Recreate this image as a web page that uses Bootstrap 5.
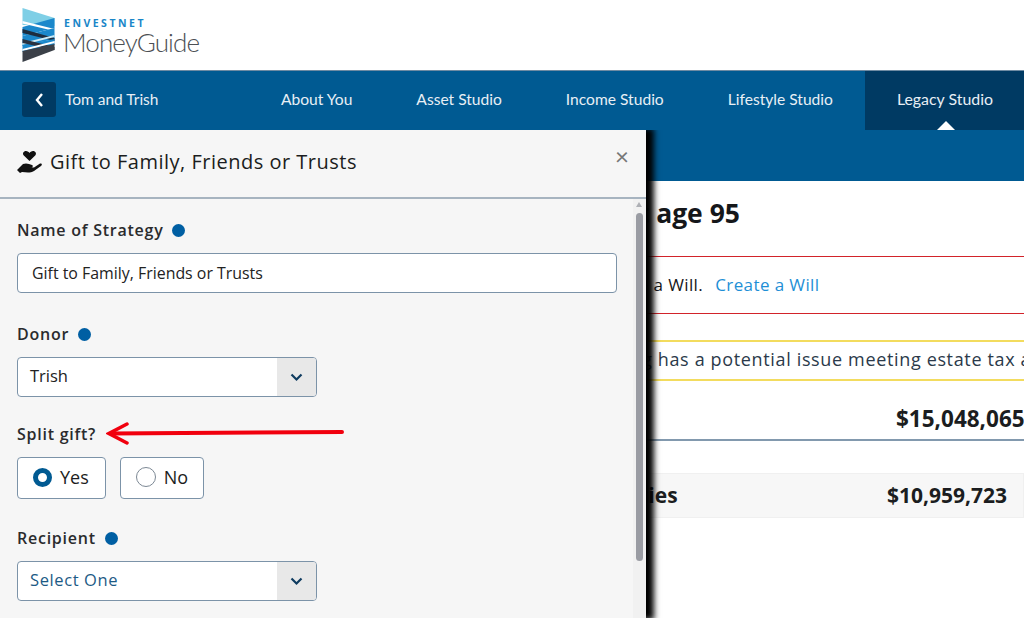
<!DOCTYPE html>
<html lang="en">
<head>
<meta charset="utf-8">
<title>MoneyGuide</title>
<link href="https://cdn.jsdelivr.net/npm/bootstrap@5.3.0/dist/css/bootstrap.min.css" rel="stylesheet">
<style>
html,body{height:618px;overflow:hidden;background:#fff}
body{font-family:"Lato","Liberation Sans",sans-serif;color:#1b1d20;position:relative}
.brand-bar{height:70px;padding-left:22px}
.brand-top{font:700 10.5px/1 "Open Sans","Liberation Sans",sans-serif;letter-spacing:2.500px;color:#1a86c8;margin-left:1px;margin-bottom:0;margin-top:3px}
.brand-name{font:300 26px/1 "Lato",sans-serif;letter-spacing:-.9px;color:#4c4f54}
.main-nav{height:60px;background:#005a92;color:#e8eff5;font-size:15.600px;border-top:1px solid #6f8ba3}
.back-group{padding-left:22px;padding-bottom:2px}
.back-btn{width:34px;height:35px;background:#003a63;border-radius:3px}
.client{width:218px;padding-left:9px;font-size:15.500px}
.nav-first{padding-left:7px!important}
.nav-item-x{padding:0 32px 2px;height:100%;display:flex;align-items:center;position:relative;white-space:nowrap}
.nav-item-x.on{background:#003a63;flex:1 0 0;justify-content:center;padding:0 0 3px 1px;font-size:15.900px}
.nav-item-x.on::after{content:"";position:absolute;left:72px;bottom:0;border:9px solid transparent;border-top:0;border-bottom:9px solid #fff}
.sub-bar{height:51px;background:#005a92}
.main-area{padding-left:400px;font-family:"Open Sans",sans-serif;font-size:17px;overflow:hidden}
.page-title{font-weight:700;font-size:26.500px;line-height:32px;margin:16px 0 27px;white-space:nowrap;color:#15171a;padding-left:16px}
.warn{height:58px;border-top:1px solid #d2232a;border-bottom:1px solid #d2232a;white-space:nowrap;overflow:hidden;margin-bottom:26px;padding-left:114px;letter-spacing:.4px;color:#15171a}
.warn a{color:#1e8fd6;text-decoration:none;margin-left:12px}
.warn2{height:41px;border-top:2px solid #f3dc5e;border-bottom:2px solid #f3dc5e;white-space:nowrap;overflow:hidden;color:#2b3a4a;font-size:18px;letter-spacing:.650px;padding:0 0 2px 127px}
.total{height:60px;border-bottom:2px solid #8299ae;white-space:nowrap;overflow:hidden;font-weight:700;font-size:22.500px;padding:18px 0 0 496px}
.tier{height:45px;margin-top:32px;background:#f7f7f7;border:1px solid #f0f0f0;font-weight:700;font-size:21px;padding:0 16px 0 37px;white-space:nowrap}
.panel-x{position:absolute;left:0;top:130px;bottom:0;width:646px;background:#f6f6f6;box-shadow:6px 0 6px 2px #000;clip-path:inset(0 -30px 0 0);z-index:5}
.panel-head{height:69px;padding:0 17px 4px;border-bottom:2px solid #a7b4c0}
.panel-title{font:400 20px/1 "Open Sans",sans-serif;color:#1b1d20;letter-spacing:.5px}
.close-x{font-size:24px;line-height:1;color:#777;margin-bottom:11px}
.panel-body-x{padding:21px 17px;position:relative}
.lbl{font:600 16px/20px "Open Sans",sans-serif;letter-spacing:.75px;color:#2a2b2d;margin-bottom:13px}
.dot{display:inline-block;width:13px;height:13px;border-radius:50%;background:#005fa3;margin-left:9px;vertical-align:-1px}
.name-input{width:600px;height:40px;border:1px solid #7c93a8;border-radius:4px;background:#fff;padding:0 14px;font:400 15.900px "Open Sans",sans-serif;margin-bottom:31px;color:#222}
.sel{width:300px;height:40px;border:1px solid #7c93a8;border-radius:4px;background:#fff;padding-left:12px;font:400 16.500px "Open Sans",sans-serif;overflow:hidden;color:#222}
.sel-text{padding-bottom:3px}
.sel.gap-after{margin-bottom:27px}
.sel-muted{color:#1c5a85;letter-spacing:.6px;font-weight:500}
.sel-arrow{width:39px;height:100%;background:#e8e8e8}
.opts{margin-bottom:29px;gap:14px}
.opt{height:42px;border:1px solid #7c93a8;border-radius:4px;background:#fff;font:400 18px "Open Sans",sans-serif;padding:0 15px 2px;gap:8px}
.opt-wide{padding-right:16px}
.radio-on{width:19px;height:19px;border:5px solid #005a92;border-radius:50%;background:#fff}
.radio-off{width:20px;height:20px;border:1px solid #7c8894;border-radius:50%;background:#fff}
.scroll-x{position:absolute;right:0;top:69px;bottom:0;width:13px;background:#f1f1f1}
.thumb{position:absolute;left:3px;top:14px;width:7px;height:348px;background:#9a9ca3;border-radius:4px}
.up-arr{position:absolute;left:3px;top:3px;border:3.500px solid transparent;border-top:0;border-bottom:5px solid #aeb0b5}
.arrow-svg{position:absolute;left:106px;top:221px}
</style>
</head>
<body>
<header class="brand-bar d-flex align-items-center">
  <svg width="33" height="54" viewBox="0 0 32 54" class="flex-shrink-0">
    <polygon points="0,0 32,10 32,18 0,17" fill="#7fcfe6"/>
    <polygon points="0,19 32,10 32,20 0,28" fill="#1b88cb"/>
    <polygon points="0,13 32,21 32,23 0,15.500" fill="#fff"/>
    <polygon points="0,28 32,20 32,31 0,38" fill="#1b88cb"/>
    <polygon points="0,21 32,30 32,33 0,25" fill="#1d2d3f"/>
    <polygon points="0,35 32,27 32,29 0,37" fill="#cdebf5"/>
    <polygon points="0,37 32,31 32,37 0,44" fill="#1b88cb"/>
    <polygon points="0,31 32,39 32,42 0,35" fill="#2a3240"/>
    <polygon points="0,41 32,33 32,35 0,43" fill="#fff"/>
    <polygon points="0,43 32,36 32,42 0,54" fill="#3b4048"/>
  </svg>
  <div style="margin-left:8px">
    <div class="brand-top">ENVESTNET</div>
    <div class="brand-name">MoneyGuide</div>
  </div>
</header>
<nav class="main-nav d-flex align-items-center">
  <div class="back-group d-flex align-items-center">
    <span class="back-btn d-flex align-items-center justify-content-center">
      <svg width="10" height="16" viewBox="0 0 10 16"><path d="M8 2 L3 8 L8 14" fill="none" stroke="#fff" stroke-width="2.400"/></svg>
    </span>
    <span class="client">Tom and Trish</span>
  </div>
  <div class="nav-item-x nav-first">About You</div>
  <div class="nav-item-x">Asset Studio</div>
  <div class="nav-item-x">Income Studio</div>
  <div class="nav-item-x">Lifestyle Studio</div>
  <div class="nav-item-x on">Legacy Studio</div>
</nav>
<div class="sub-bar"></div>
<main class="main-area">
  <div class="page-title">Estate Analysis at age 95</div>
  <div class="warn d-flex align-items-center">You do not have a Will. <a href="#">Create a Will</a></div>
  <div class="warn2 d-flex align-items-center">Your planning has a potential issue meeting estate tax and other needs</div>
  <div class="total d-flex align-items-center">$15,048,065</div>
  <div class="tier d-flex align-items-center justify-content-between"><span>Non-Charitable Parties</span><span>$10,959,723</span></div>
</main>
<aside class="panel-x">
  <div class="panel-head d-flex align-items-center justify-content-between">
    <div class="d-flex align-items-center gap-2">
      <svg width="25" height="22" viewBox="0 0 25 22"><path d="M12.500 10 L6.800 4.500 C5 2.500 6.500 0 9 0 C10.500 0 12 1 12.500 2 C13 1 14.500 0 16 0 C18.500 0 20 2.500 18.200 4.500Z" fill="#111"/><path d="M0 19 L6 13 C8 12.300 10 12.300 12 13 L15 14 C16.500 14.500 16 16.500 14 16.300 L10 16 L17 16.500 L23 12.500 C25 12 25.500 14 24 15 L17 20 C15 21.500 13 21.500 11 21.500 L5 21 L3 22 Z" fill="#111"/></svg>
      <span class="panel-title">Gift to Family, Friends or Trusts</span>
    </div>
    <span class="close-x">×</span>
  </div>
  <div class="panel-body-x">
    <div class="lbl">Name of Strategy<span class="dot"></span></div>
    <div class="name-input d-flex align-items-center">Gift to Family, Friends or Trusts</div>
    <div class="lbl">Donor<span class="dot"></span></div>
    <div class="sel gap-after d-flex align-items-center justify-content-between"><span class="sel-text">Trish</span><span class="sel-arrow d-flex align-items-center justify-content-center"><svg width="13" height="9" viewBox="0 0 13 9"><path d="M1.500 1.500 L6.500 6.500 L11.500 1.500" fill="none" stroke="#0f3c60" stroke-width="2.200"/></svg></span></div>
    <div class="lbl">Split gift?</div>
    <div class="opts d-flex">
      <div class="opt opt-wide d-flex align-items-center"><span class="radio-on"></span>Yes</div>
      <div class="opt d-flex align-items-center"><span class="radio-off"></span>No</div>
    </div>
    <div class="lbl">Recipient<span class="dot"></span></div>
    <div class="sel sel-muted d-flex align-items-center justify-content-between"><span class="sel-text">Select One</span><span class="sel-arrow d-flex align-items-center justify-content-center"><svg width="13" height="9" viewBox="0 0 13 9"><path d="M1.500 1.500 L6.500 6.500 L11.500 1.500" fill="none" stroke="#0f3c60" stroke-width="2.200"/></svg></span></div>
    <svg class="arrow-svg" width="240" height="26" viewBox="0 0 240 26"><path d="M236 12 L5 13.500" stroke="#f1000e" stroke-width="4" stroke-linecap="round" fill="none"/><path d="M21 4 L3 13.500 L21 23" stroke="#f1000e" stroke-width="3.500" fill="none" stroke-linecap="round"/></svg>
  </div>
  <div class="scroll-x"><span class="up-arr"></span><span class="thumb"></span></div>
</aside>
</body>
</html>
